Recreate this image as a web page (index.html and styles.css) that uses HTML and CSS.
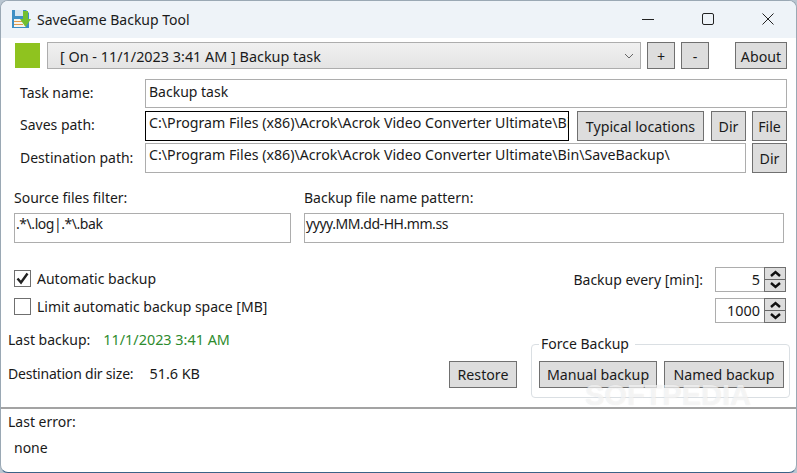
FILE: index.html
```html
<!DOCTYPE html>
<html lang="en">
<head>
  <meta charset="UTF-8" />
  <title>SaveGame Backup Tool</title>
  <link rel="stylesheet" href="styles.css">
</head>
<body>
  <div class="window">
    <header class="titlebar">
      <svg class="app-icon" width="20" height="20" viewBox="0 0 20 20">
        <path d="M1 1h14l3 3v15H1z" fill="#3d8fc4"/>
        <rect x="4" y="1" width="8" height="6" fill="#d5e6f1"/>
        <rect x="3" y="10" width="12" height="8" fill="#f7f5ee"/>
        <rect x="3" y="12" width="9" height="1" fill="#e39a4a"/>
        <rect x="3" y="15" width="9" height="1" fill="#e39a4a"/>
        <path d="M12 2h5v8h3l-5.500 8-5.500-8h3z" fill="#72bf2f"/>
      </svg>
      <span class="app-title">SaveGame Backup Tool</span>
      <div class="win-controls">
        <svg width="14" height="14" viewBox="0 0 14 14"><path d="M1 7.500h12" stroke="#222" fill="none"/></svg>
        <svg width="14" height="14" viewBox="0 0 14 14"><rect x="1.500" y="1.500" width="11" height="11" rx="1.500" stroke="#222" fill="none"/></svg>
        <svg width="14" height="14" viewBox="0 0 14 14"><path d="M1.500 1.500l11 11M12.500 1.500l-11 11" stroke="#222" fill="none"/></svg>
      </div>
    </header>

    <main class="content">
      <div class="row task-row">
        <span class="status-light"></span>
        <div class="combo">
          <span>[ On - 11/1/2023 3:41 AM ] Backup task</span>
          <svg width="10" height="6" viewBox="0 0 10 6"><path d="M1 1l4 4 4-4" stroke="#666" fill="none"/></svg>
        </div>
        <button class="btn btn-small">+</button>
        <button class="btn btn-small">-</button>
        <button class="btn btn-about">About</button>
      </div>

      <div class="row name-row">
        <label class="field-label">Task name:</label>
        <div class="input grow">Backup task</div>
      </div>

      <div class="row saves-row">
        <label class="field-label">Saves path:</label>
        <div class="input input-focus grow">C:\Program Files (x86)\Acrok\Acrok Video Converter Ultimate\Bin\SaveBackup\</div>
        <button class="btn btn-typical">Typical locations</button>
        <button class="btn btn-dir">Dir</button>
        <button class="btn btn-dir">File</button>
      </div>

      <div class="row dest-row">
        <label class="field-label">Destination path:</label>
        <div class="input grow">C:\Program Files (x86)\Acrok\Acrok Video Converter Ultimate\Bin\SaveBackup\</div>
        <button class="btn btn-dir">Dir</button>
      </div>

      <div class="filters">
        <div class="filter filter-source">
          <label>Source files filter:</label>
          <div class="input">.*\.log|.*\.bak</div>
        </div>
        <div class="filter filter-pattern">
          <label>Backup file name pattern:</label>
          <div class="input">yyyy.MM.dd-HH.mm.ss</div>
        </div>
      </div>

      <div class="auto-row">
        <span class="check">
          <svg width="15" height="15" viewBox="0 0 15 15"><path d="M2.500 7.500l3.500 4 6.500-9" stroke="#222" stroke-width="2.400" fill="none"/></svg>
        </span>
        <span class="check-text">Automatic backup</span>
        <span class="every">Backup every [min]:</span>
        <div class="spinner">
          <span class="spin-value">5</span>
          <span class="spin-btns">
            <span class="spin-btn"><svg width="11" height="7" viewBox="0 0 11 7"><path d="M1 6l4.500-4 4.500 4" stroke="#111" stroke-width="2.400" fill="none"/></svg></span>
            <span class="spin-btn"><svg width="11" height="7" viewBox="0 0 11 7"><path d="M1 1l4.500 4 4.500-4" stroke="#111" stroke-width="2.400" fill="none"/></svg></span>
          </span>
        </div>
      </div>

      <div class="auto-row limit-row">
        <span class="check"></span>
        <span class="check-text">Limit automatic backup space [MB]</span>
        <div class="spinner">
          <span class="spin-value">1000</span>
          <span class="spin-btns">
            <span class="spin-btn"><svg width="11" height="7" viewBox="0 0 11 7"><path d="M1 6l4.500-4 4.500 4" stroke="#111" stroke-width="2.400" fill="none"/></svg></span>
            <span class="spin-btn"><svg width="11" height="7" viewBox="0 0 11 7"><path d="M1 1l4.500 4 4.500-4" stroke="#111" stroke-width="2.400" fill="none"/></svg></span>
          </span>
        </div>
      </div>

      <div class="bottom">
        <div class="stats">
          <div class="stat"><span class="stat-name">Last backup:</span><span class="stat-ok">11/1/2023 3:41 AM</span></div>
          <div class="stat stat-size"><span class="stat-name">Destination dir size:</span><span class="stat-val">51.6 KB</span></div>
        </div>
        <button class="btn btn-restore">Restore</button>
        <fieldset class="force">
          <legend>Force Backup</legend>
          <button class="btn btn-manual">Manual backup</button>
          <button class="btn btn-named">Named backup</button>
        </fieldset>
      </div>
    </main>

    <footer class="errors">
      <div>Last error:</div>
      <div class="error-value">none</div>
    </footer>

    <span class="watermark">SOFTPEDIA</span>
  </div>
</body>
</html>
```

FILE: styles.css
```css
:root {
  --text: #1a1a1a;
  --border: #adadad;
  --btn: #dddddd;
  --btn-border: #707070;
}

html, body {
  margin: 0;
  padding: 0;
  height: 100%;
  background: #b9c6d1;
}

body {
  font-family: 'Noto Sans', sans-serif;
  font-size: 14px;
  color: var(--text);
  overflow: hidden;
}

.window {
  position: relative;
  width: 797px;
  height: 473px;
  box-sizing: border-box;
  background: #fff;
  border-radius: 8px;
  border: 1px solid #9aa8b4;
  border-bottom-color: #3a6286;
  overflow: hidden;
  display: flex;
  flex-direction: column;
}

.titlebar {
  flex: none;
  height: 37px;
  background: #eef3f8;
  display: flex;
  align-items: center;
  padding-left: 10px;
  padding-bottom: 1px;
  box-sizing: border-box;
}

.app-icon {
  margin-right: 6px;
}

.win-controls {
  margin-left: auto;
  display: flex;
  gap: 46px;
  padding-right: 21px;
}

.content {
  flex: 1;
  position: relative;
  padding: 4px 9px 0 14px;
}

.row {
  display: flex;
  align-items: stretch;
}

.task-row {
  height: 27px;
}

.task-row .btn,
.combo span {
  padding-top: 1px;
}

.status-light {
  width: 25px;
  height: 25px;
  margin-top: 1px;
  margin-right: 7px;
  background: #8fc31f;
}

.combo {
  flex: 1;
  display: flex;
  align-items: center;
  justify-content: space-between;
  padding: 0 6px 0 12px;
  border: 1px solid var(--border);
  background: linear-gradient(#f0f0f0, #e4e4e4);
  margin-right: 6px;
  font-size: 14.4px;
}

.btn {
  font: inherit;
  font-size: 14.2px;
  color: var(--text);
  background: var(--btn);
  border: 1px solid var(--btn-border);
  padding: 0;
  box-sizing: border-box;
}

.btn-small {
  width: 28px;
  margin-right: 6px;
}

.btn-about {
  width: 52px;
  margin-left: 20px;
}

.field-label {
  width: 125px;
  margin-left: 5px;
  flex: none;
  padding-top: 4px;
}

.input {
  border: 1px solid var(--border);
  padding: 1px 3px;
  box-sizing: border-box;
  white-space: nowrap;
  overflow: hidden;
  background: #fff;
  font-size: 14.2px;
}

.grow {
  flex: 1;
  min-width: 0;
}

.name-row {
  margin-top: 10px;
  height: 29px;
}

.name-row .input {
  padding-top: 2px;
  font-size: 14px;
}

.saves-row {
  margin-top: 3px;
  height: 30px;
}

.input-focus {
  border-color: #000;
  margin-right: 8px;
}

.btn-typical {
  width: 127px;
  margin-right: 7px;
}

.btn-dir {
  width: 35px;
}

.btn-dir + .btn-dir {
  margin-left: 6px;
}

.dest-row {
  margin-top: 2px;
  height: 30px;
}

.dest-row .field-label {
  padding-top: 5px;
}

.dest-row .input {
  margin-right: 6px;
}

.filters {
  display: flex;
  gap: 13px;
  margin-top: 10px;
  margin-left: -1px;
}

.filter label {
  display: block;
  line-height: 20px;
  margin: 5px 0;
}

.filter .input {
  height: 30px;
  padding: 0 1px;
  font-size: 14px;
  letter-spacing: -0.45px;
}

.filter-source {
  width: 277px;
  flex: none;
}

.filter-pattern {
  width: 480px;
  flex: none;
}

.auto-row {
  display: flex;
  align-items: center;
  height: 25px;
  margin-top: 24px;
  margin-left: -1px;
  padding-right: 1px;
}

.auto-row .check,
.auto-row .check-text {
  margin-bottom: 2px;
}

.limit-row {
  margin-top: 6px;
}

.limit-row .check,
.limit-row .check-text {
  margin-bottom: 8px;
}

.check {
  width: 15px;
  height: 15px;
  border: 1px solid #6f6f6f;
  margin-right: 6px;
  display: flex;
  background: #fff;
}

.every {
  margin-left: auto;
  margin-right: 12px;
}

.limit-row .spinner {
  margin-left: auto;
}

.spinner {
  width: 71px;
  height: 25px;
  box-sizing: border-box;
  border: 1px solid var(--border);
  display: flex;
  justify-content: flex-end;
  font-size: 14.4px;
}

.spin-value {
  line-height: 23px;
  padding-right: 4px;
}

.spin-btns {
  width: 22px;
  flex: none;
  display: flex;
  flex-direction: column;
  gap: 1px;
  box-sizing: border-box;
  border: 1px solid var(--btn-border);
  margin: -1px -1px -1px 0;
  background: #666;
}

.spin-btn {
  flex: 1;
  background: var(--btn);
  display: flex;
  align-items: center;
  justify-content: center;
}

.bottom {
  display: flex;
  margin: 7px -3px 0 -7px;
}

.stats {
  width: 441px;
  flex: none;
}

.stat {
  display: flex;
  height: 20px;
  line-height: 20px;
}

.stat-name {
  margin-right: 13px;
}

.stat-size {
  margin-top: 14px;
}

.stat-size .stat-name {
  letter-spacing: -0.2px;
  margin-right: 16px;
}

.stat-ok,
.stat-val {
  font-size: 14.4px;
}

.stat-ok {
  color: #2e8b2e;
}

.btn-restore {
  width: 68px;
  height: 27px;
  flex: none;
  margin-top: 31px;
  margin-right: 14px;
}

.force {
  width: 259px;
  height: 64px;
  flex: none;
  box-sizing: border-box;
  margin: 4px 0 0 0;
  padding: 0 0 0 7px;
  border: 1px solid #dadfe3;
  border-radius: 4px;
  display: flex;
  gap: 7px;
}

.force legend {
  padding: 0 6px 0 2px;
  line-height: 20px;
}

.force .btn {
  height: 27px;
  margin-top: 7px;
}

.btn-manual {
  width: 118px;
  flex: none;
}

.btn-named {
  width: 120px;
  flex: none;
}

.errors {
  flex: none;
  height: 65px;
  box-sizing: border-box;
  border-top: 2px solid #a3a3a3;
  padding: 3px 0 0 7px;
  line-height: 20px;
}

.error-value {
  margin-top: 6px;
  margin-left: 6px;
}

.watermark {
  position: absolute;
  left: 584px;
  top: 378px;
  font-family: 'Liberation Sans', sans-serif;
  font-size: 29px;
  font-weight: bold;
  color: rgba(255, 255, 255, 0.6);
  text-shadow: 0 0 1px rgba(190, 190, 190, 0.4);
  pointer-events: none;
}
```
